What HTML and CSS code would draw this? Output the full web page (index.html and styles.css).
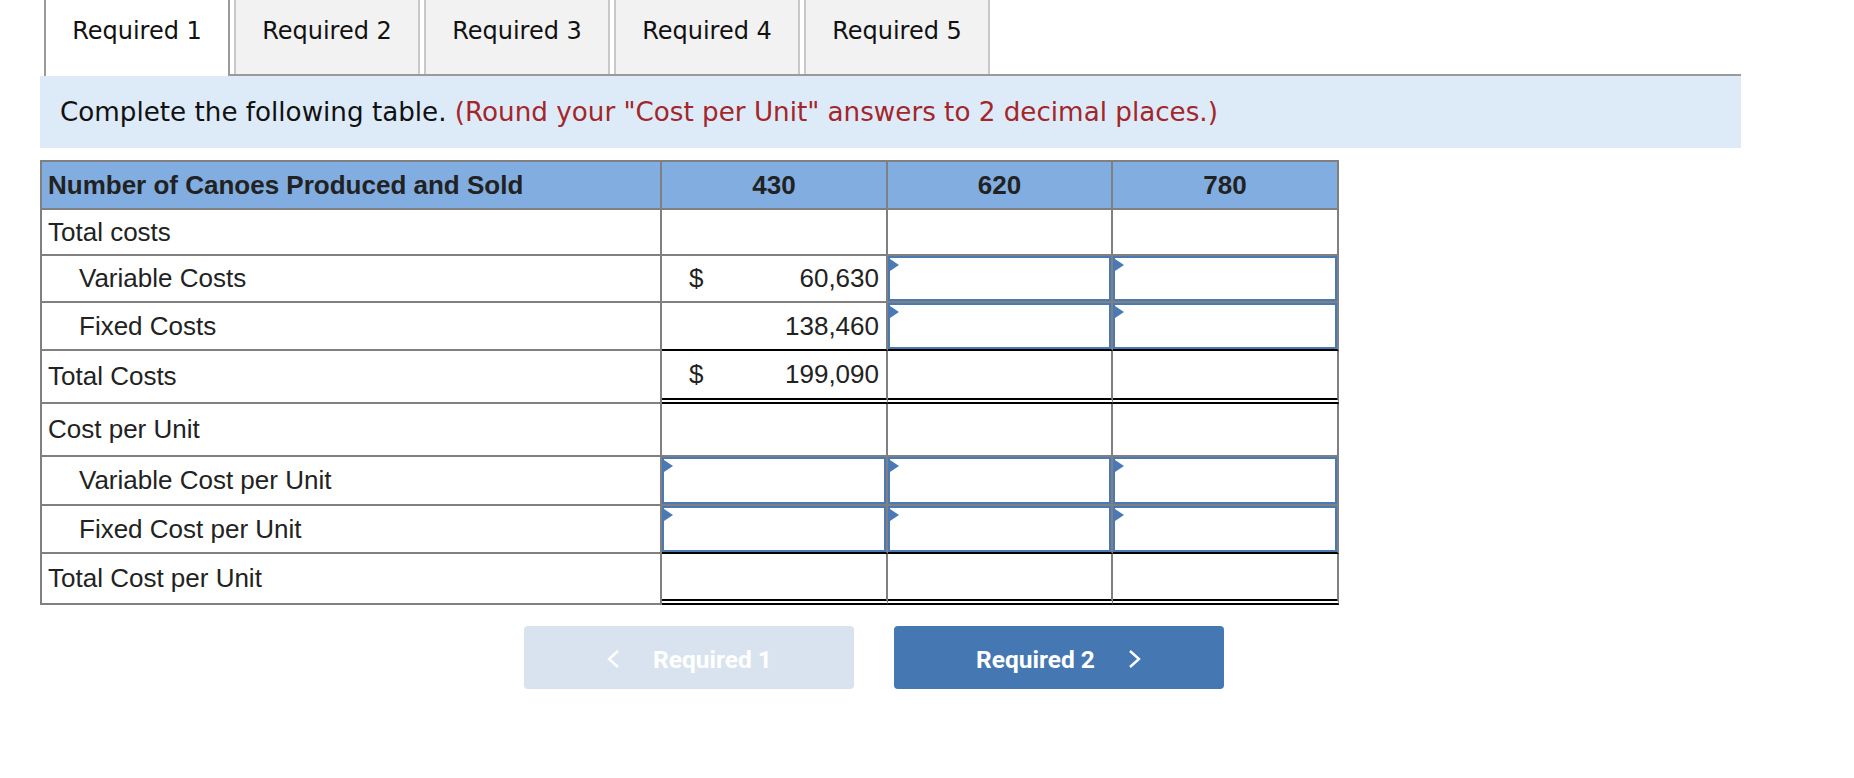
FILE: index.html
```html
<!DOCTYPE html>
<html lang="en">
<head>
<meta charset="utf-8">
<title>Required 1</title>
<link rel="stylesheet" href="styles.css">
</head>
<body>
<div class="tabbar">
  <div class="tab active">Required 1</div>
  <div class="tab">Required 2</div>
  <div class="tab">Required 3</div>
  <div class="tab">Required 4</div>
  <div class="tab">Required 5</div>
</div>
<div class="band">
  <p class="instr">Complete the following table. <span class="note">(Round your "Cost per Unit" answers to 2 decimal places.)</span></p>
</div>
<div class="tbl">
  <div class="c hd lab">Number of Canoes Produced and Sold</div>
  <div class="c hd num">430</div>
  <div class="c hd num">620</div>
  <div class="c hd num">780</div>

  <div class="c lab">Total costs</div>
  <div class="c"></div>
  <div class="c"></div>
  <div class="c"></div>

  <div class="c lab ind">Variable Costs</div>
  <div class="c val"><span>$</span><span>60,630</span></div>
  <div class="c inp"><input type="text" aria-label="Variable Costs 620"></div>
  <div class="c inp"><input type="text" aria-label="Variable Costs 780"></div>

  <div class="c lab ind">Fixed Costs</div>
  <div class="c val sum-top"><span></span><span>138,460</span></div>
  <div class="c inp sum-top"><input type="text" aria-label="Fixed Costs 620"></div>
  <div class="c inp sum-top"><input type="text" aria-label="Fixed Costs 780"></div>

  <div class="c lab">Total Costs</div>
  <div class="c val dbl"><span>$</span><span>199,090</span></div>
  <div class="c dbl"></div>
  <div class="c dbl"></div>

  <div class="c lab">Cost per Unit</div>
  <div class="c"></div>
  <div class="c"></div>
  <div class="c"></div>

  <div class="c lab ind">Variable Cost per Unit</div>
  <div class="c inp"><input type="text" aria-label="Variable Cost per Unit 430"></div>
  <div class="c inp"><input type="text" aria-label="Variable Cost per Unit 620"></div>
  <div class="c inp"><input type="text" aria-label="Variable Cost per Unit 780"></div>

  <div class="c lab ind">Fixed Cost per Unit</div>
  <div class="c inp sum-top"><input type="text" aria-label="Fixed Cost per Unit 430"></div>
  <div class="c inp sum-top"><input type="text" aria-label="Fixed Cost per Unit 620"></div>
  <div class="c inp sum-top"><input type="text" aria-label="Fixed Cost per Unit 780"></div>

  <div class="c lab">Total Cost per Unit</div>
  <div class="c dbl"></div>
  <div class="c dbl"></div>
  <div class="c dbl"></div>
</div>
<div class="nav">
  <button class="btn prev" type="button">
    <svg class="chev" width="14" height="20" viewBox="0 0 14 20"><polyline points="12,2 3,10 12,18" fill="none" stroke="#fff" stroke-width="2.4"/></svg>
    <span>Required 1</span>
  </button>
  <button class="btn next" type="button">
    <span>Required 2</span>
    <svg class="chev" width="14" height="20" viewBox="0 0 14 20"><polyline points="2,2 11,10 2,18" fill="none" stroke="#fff" stroke-width="2.4"/></svg>
  </button>
</div>
</body>
</html>
```
FILE: styles.css
```css
* { box-sizing: border-box; }
body {
  margin: 0;
  background: #fff;
  font-family: "Liberation Sans", Arial, sans-serif;
  color: #222;
}
.tabbar {
  display: flex;
  gap: 4px;
  margin-left: 44px;
  width: 1697px;
  height: 76px;
  border-bottom: 2px solid #9a9a9a;
}
.tab {
  width: 186px;
  height: 74px;
  padding-top: 17px;
  text-align: center;
  font-family: "DejaVu Sans", Verdana, sans-serif;
  font-size: 24px;
  color: #111;
  background: #f2f2f2;
  border-left: 2px solid #c8c8c8;
  border-right: 2px solid #c8c8c8;
}
.tab.active {
  background: #fff;
  height: 76px;
  margin-bottom: -2px;
  border-left-color: #9a9a9a;
  border-right-color: #9a9a9a;
}
.band {
  margin-left: 40px;
  width: 1701px;
  height: 72px;
  background: #ddebf8;
  display: flex;
  align-items: center;
  padding-left: 20px;
}
.instr {
  margin: 0;
  font-family: "DejaVu Sans", Verdana, sans-serif;
  font-size: 26.2px;
  color: #111;
  white-space: nowrap;
}
.note { color: #a3262a; }

.tbl {
  display: grid;
  grid-template-columns: 620px 226px 225px 226px;
  grid-template-rows: 48px 46px 47px 48px 53px 53px 49px 48px 51px;
  margin: 12px 0 0 40px;
  width: 1299px;
  border-left: 2px solid #808080;
  border-top: 2px solid #808080;
  font-size: 26px;
}
.c {
  display: flex;
  align-items: center;
  border-right: 2px solid #808080;
  border-bottom: 2px solid #808080;
  background: #fff;
}
.hd {
  background: #81ade0;
  font-weight: bold;
  color: #222;
}
.hd.num { justify-content: center; }
.lab { padding-left: 6px; }
.lab.ind { padding-left: 37px; }
.val {
  justify-content: space-between;
  padding: 0 7px 0 27px;
}
.sum-top { border-bottom: 2px solid #000; }
.dbl { border-bottom: 6px double #000; }
.inp {
  position: relative;
  align-items: stretch;
}
.inp input {
  display: block;
  width: 100%;
  height: 100%;
  margin: 0;
  padding: 0 8px;
  border: 2px solid #4a79b6;
  background: #fff;
  font: inherit;
  outline: none;
}
.inp::before {
  content: "";
  position: absolute;
  left: 2px;
  top: 3px;
  border-left: 9px solid #4a79b6;
  border-top: 6px solid transparent;
  border-bottom: 6px solid transparent;
}

.nav {
  display: flex;
  gap: 40px;
  margin: 21px 0 0 524px;
}
.btn {
  width: 330px;
  height: 63px;
  border: none;
  border-radius: 4px;
  display: flex;
  align-items: center;
  justify-content: center;
  gap: 33px;
  font-family: Roboto, "Liberation Sans", sans-serif;
  font-weight: 700;
  font-size: 24.5px;
  color: #fff;
  padding: 3px 0 0;
}
.btn.prev { background: #d9e3ef; }
.btn.next { background: #4577b3; }
.chev { display: block; }
```
